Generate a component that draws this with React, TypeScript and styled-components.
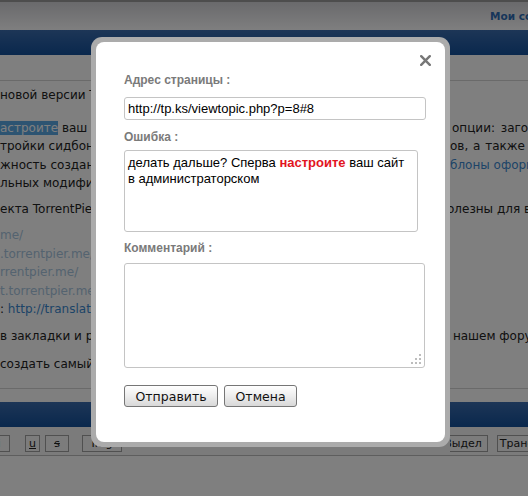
import React from "react";
import styled, { createGlobalStyle } from "styled-components";

const GlobalStyle = createGlobalStyle`
  html, body { margin: 0; padding: 0; background: #fff; }
  * { box-sizing: border-box; }
`;

const Page = styled.div`
  position: relative;
  width: 528px;
  height: 496px;
  overflow: hidden;
  background: #fff;
  color: #222;
  font-family: "DejaVu Sans", Verdana, sans-serif;
  font-size: 12px;
`;

const TopBar = styled.div`
  height: 30px;
  border-top: 2px solid #9a9a9a;
  background: linear-gradient(#d4d4d8, #fefeff);
  display: flex;
  align-items: center;
  padding-left: 490px;
  white-space: nowrap;
`;

const TopLink = styled.a`
  color: #2f6cb4;
  font-weight: bold;
  font-size: 10.5px;
  text-decoration: none;
`;

const BlueBar = styled.div<{ $mt?: number }>`
  height: 25px;
  margin-top: ${(p) => p.$mt ?? 0}px;
  background: linear-gradient(#3a6cae, #14509a);
`;

const SubBar = styled.div`
  height: 26px;
  border-bottom: 1px solid #d4d4d4;
`;

const Content = styled.div`
  height: 303px;
  border-bottom: 1px solid #d4d4d4;
`;

const Para = styled.div<{ $mt: number }>`
  margin-top: ${(p) => p.$mt}px;
`;

const Line = styled.div`
  display: grid;
  grid-template-columns: 450px 1fr;
  line-height: 18.5px;
  white-space: nowrap;
`;

const Lead = styled.span`
  overflow: hidden;
`;

const Tail = styled.span<{ $shift?: number; $ws?: number }>`
  overflow: hidden;
  text-indent: ${(p) => p.$shift ?? 0}px;
  word-spacing: ${(p) => p.$ws ?? 0}px;
`;

const Link = styled.a<{ $light?: boolean }>`
  color: ${(p) => (p.$light ? "#a8c6e0" : "#3a88d0")};
  text-decoration: none;
`;

const Sel = styled.span`
  background: #5aa8e4;
  color: #fff;
`;

const Toolbar = styled.div`
  display: grid;
  grid-template-columns: 450px 1fr;
  padding: 8px 0 3px;
  border-bottom: 1px solid #bcbcbc;
  background: #f6f6f6;
`;

const ToolGroup = styled.div`
  display: flex;
  overflow: hidden;
`;

const ToolButton = styled.span<{ $w: number; $ml: number; $deco?: string }>`
  flex: none;
  width: ${(p) => p.$w}px;
  height: 17px;
  margin-left: ${(p) => p.$ml}px;
  border: 1px solid #a0a0a0;
  background: #f8f8f8;
  font-size: 11px;
  line-height: 15px;
  text-align: center;
  overflow: hidden;
  white-space: nowrap;
  text-decoration: ${(p) => p.$deco ?? "none"};
`;

/* modal */

const Overlay = styled.div`
  position: absolute;
  inset: 0;
  background: rgba(0, 0, 0, 0.5);
`;

const Dialog = styled.div`
  position: absolute;
  left: 91px;
  top: 37px;
  padding: 5px;
  background: #ababab;
  border-radius: 11px;
`;

const DialogBody = styled.form`
  position: relative;
  width: 349px;
  height: 400px;
  padding: 30px 19px 0 28px;
  background: #fff;
  border-radius: 8px;
  display: flex;
  flex-direction: column;
  align-items: flex-start;
  font-family: "Liberation Sans", Arial, sans-serif;
`;

const Close = styled.button`
  position: absolute;
  top: 13px;
  right: 14px;
  width: 11px;
  height: 11px;
  padding: 0;
  border: 0;
  background: none;
  display: flex;
`;

const Label = styled.label<{ $mt?: number }>`
  margin-top: ${(p) => p.$mt ?? 0}px;
  font-size: 12px;
  line-height: 16px;
  font-weight: bold;
  color: #7a7a7a;
`;

const TextInput = styled.input`
  margin-top: 9px;
  width: 302px;
  height: 23px;
  padding: 0 3px;
  border: 1px solid #c4c4c4;
  border-radius: 3px;
  font-family: "Liberation Sans", Arial, sans-serif;
  font-size: 13px;
  color: #000;
  outline: none;
`;

const Area = styled.div<{ $w: number; $h: number; $mt: number }>`
  position: relative;
  margin-top: ${(p) => p.$mt}px;
  width: ${(p) => p.$w}px;
  height: ${(p) => p.$h}px;
  padding: 4px 3px;
  border: 1px solid #c4c4c4;
  border-radius: 3px;
  font-size: 13px;
  line-height: 16px;
  color: #000;
`;

const Strong = styled.b`
  color: #e2141e;
`;

const Grip = styled.svg`
  position: absolute;
  right: 2px;
  bottom: 2px;
`;

const Actions = styled.div`
  margin-top: 17px;
  display: flex;
  gap: 6px;
`;

const Button = styled.button`
  height: 22px;
  padding: 0 10.5px;
  border: 1px solid #767676;
  border-radius: 3px;
  background: linear-gradient(#ffffff, #ededed 50%, #d8d8d8);
  font-family: "DejaVu Sans", Verdana, sans-serif;
  font-size: 12.5px;
  color: #111;
`;

export default function App() {
  return (
    <Page>
      <GlobalStyle />
      <TopBar>
        <TopLink href="#">Мои сообщения</TopLink>
      </TopBar>
      <BlueBar />
      <SubBar />
      <Content>
        <Para $mt={5}>
          <Line>
            <Lead>новой версии TP</Lead>
            <Tail />
          </Line>
        </Para>
        <Para $mt={14}>
          <Line>
            <Lead>
              <Sel>астроите</Sel> ваш сайт
            </Lead>
            <Tail $shift={2} $ws={2}>опции: заголовок</Tail>
          </Line>
          <Line>
            <Lead>тройки сидбонуса</Lead>
            <Tail $ws={1}>ов, а также</Tail>
          </Line>
          <Line>
            <Lead>жность создания</Lead>
            <Tail>
              <Link href="#">блоны оформления</Link>
            </Tail>
          </Line>
          <Line>
            <Lead>льных модификаций</Lead>
            <Tail />
          </Line>
        </Para>
        <Para $mt={7}>
          <Line>
            <Lead>екта TorrentPier</Lead>
            <Tail $shift={-3}>олезны для вас:</Tail>
          </Line>
        </Para>
        <Para $mt={8}>
          <Line>
            <Lead>
              <Link href="#" $light>me/</Link>
            </Lead>
            <Tail />
          </Line>
          <Line>
            <Lead>
              <Link href="#" $light>.torrentpier.me/</Link>
            </Lead>
            <Tail />
          </Line>
          <Line>
            <Lead>
              <Link href="#" $light>rrentpier.me/</Link>
            </Lead>
            <Tail />
          </Line>
          <Line>
            <Lead>
              <Link href="#" $light>t.torrentpier.me/</Link>
            </Lead>
            <Tail />
          </Line>
          <Line>
            <Lead>
              : <Link href="#">http://translate</Link>
            </Lead>
            <Tail />
          </Line>
        </Para>
        <Para $mt={8}>
          <Line>
            <Lead>в закладки и регу</Lead>
            <Tail $shift={-8}>в нашем форуме</Tail>
          </Line>
        </Para>
        <Para $mt={10}>
          <Line>
            <Lead>создать самый лу</Lead>
            <Tail />
          </Line>
        </Para>
      </Content>
      <BlueBar $mt={13} />
      <Toolbar>
        <ToolGroup>
          <ToolButton $w={22} $ml={-12}>i</ToolButton>
          <ToolButton $w={15} $ml={15} $deco="underline">u</ToolButton>
          <ToolButton $w={24} $ml={5} $deco="line-through">s</ToolButton>
          <ToolButton $w={40} $ml={13}>Img</ToolButton>
        </ToolGroup>
        <ToolGroup>
          <ToolButton $w={50} $ml={-12}>Выдел</ToolButton>
          <ToolButton $w={60} $ml={9}>Транслит</ToolButton>
        </ToolGroup>
      </Toolbar>

      <Overlay />
      <Dialog>
        <DialogBody onSubmit={(e) => e.preventDefault()}>
          <Close type="button" aria-label="Закрыть">
            <svg width="11" height="11" viewBox="0 0 11 11">
              <path d="M1.2 1.2L9.8 9.8M9.8 1.2L1.2 9.8" stroke="#777" strokeWidth="2.4" strokeLinecap="round" />
            </svg>
          </Close>
          <Label>Адрес страницы :</Label>
          <TextInput defaultValue="http://tp.ks/viewtopic.php?p=8#8" />
          <Label $mt={9}>Ошибка :</Label>
          <Area $w={294} $h={82} $mt={5}>
            делать дальше? Сперва <Strong>настроите</Strong> ваш сайт
            <br />в администраторском
          </Area>
          <Label $mt={8}>Комментарий :</Label>
          <Area $w={301} $h={105} $mt={7}>
            <Grip width="11" height="11" viewBox="0 0 11 11">
              <g fill="#bdbdbd">
                <rect x="8" y="0" width="2" height="2" />
                <rect x="4" y="4" width="2" height="2" />
                <rect x="8" y="4" width="2" height="2" />
                <rect x="0" y="8" width="2" height="2" />
                <rect x="4" y="8" width="2" height="2" />
                <rect x="8" y="8" width="2" height="2" />
              </g>
            </Grip>
          </Area>
          <Actions>
            <Button type="submit">Отправить</Button>
            <Button type="button">Отмена</Button>
          </Actions>
        </DialogBody>
      </Dialog>
    </Page>
  );
}
